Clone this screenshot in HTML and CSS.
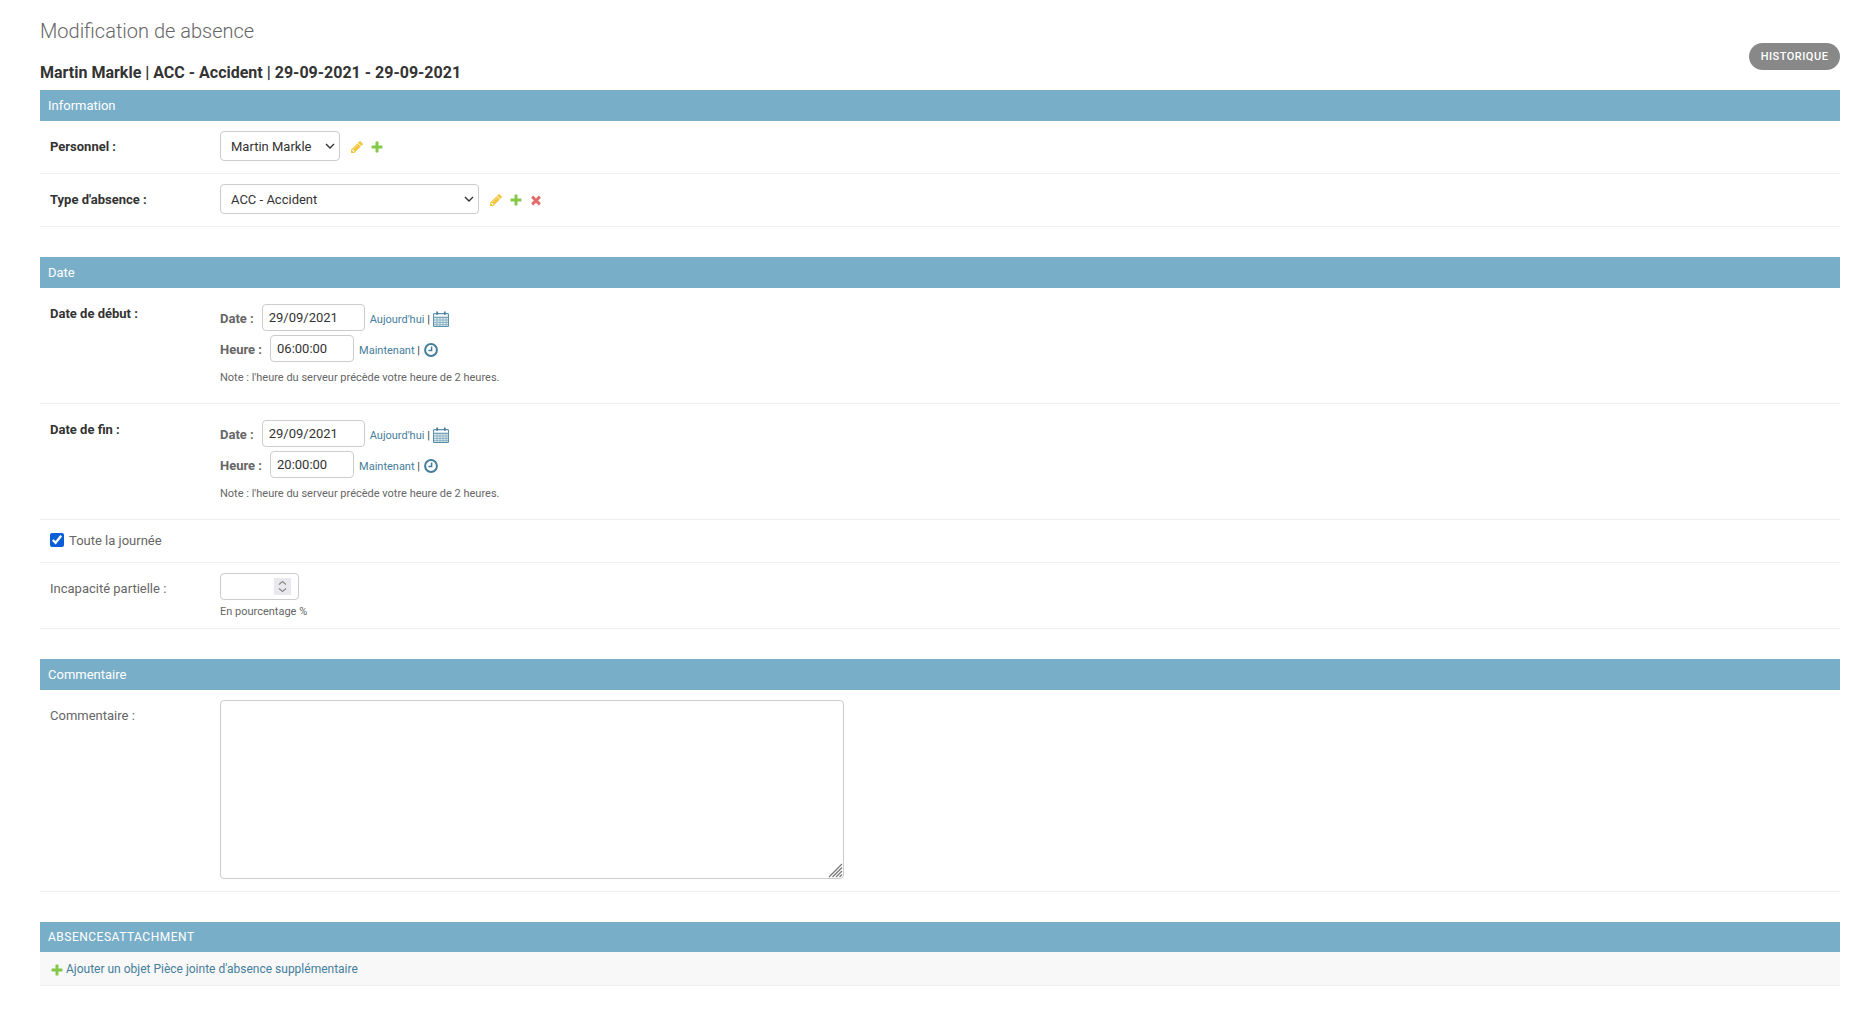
FILE: index.html
```html
<!DOCTYPE html>
<html lang="fr">
<head>
<meta charset="utf-8">
<title>Modification de absence</title>
<link rel="stylesheet" href="styles.css">
</head>
<body>
<main class="page">
  <h1 class="title">Modification de absence</h1>
  <div class="subhead">
    <h2 class="record">Martin Markle | ACC - Accident | 29-09-2021 - 29-09-2021</h2>
    <a class="history" href="#">Historique</a>
  </div>

  <section class="module">
    <h3 class="module-title">Information</h3>
    <div class="row row-select">
      <label class="label strong">Personnel :</label>
      <select class="select select-person"><option>Martin Markle</option></select>
      <span class="actions">
        <svg class="ic" viewBox="0 0 1792 1792"><path class="i-edit" d="M491 1536l91-91-235-235-91 91v107h128v128h107zm523-928q0-22-22-22-10 0-17 7l-542 542q-7 7-7 17 0 22 22 22 10 0 17-7l542-542q7-7 7-17zm-54-192l416 416-832 832h-416v-416zm683 96q0 53-37 90l-166 166-416-416 166-165q36-38 90-38 53 0 91 38l235 234q37 39 37 91z"/></svg>
        <svg class="ic" viewBox="0 0 1792 1792"><path class="i-add" d="M1600 796v192q0 40-28 68t-68 28h-416v416q0 40-28 68t-68 28h-192q-40 0-68-28t-28-68v-416h-416q-40 0-68-28t-28-68v-192q0-40 28-68t68-28h416v-416q0-40 28-68t68-28h192q40 0 68 28t28 68v416h416q40 0 68 28t28 68z"/></svg>
      </span>
    </div>
    <div class="row row-select">
      <label class="label strong">Type d'absence :</label>
      <select class="select select-type"><option>ACC - Accident</option></select>
      <span class="actions">
        <svg class="ic" viewBox="0 0 1792 1792"><path class="i-edit" d="M491 1536l91-91-235-235-91 91v107h128v128h107zm523-928q0-22-22-22-10 0-17 7l-542 542q-7 7-7 17 0 22 22 22 10 0 17-7l542-542q7-7 7-17zm-54-192l416 416-832 832h-416v-416zm683 96q0 53-37 90l-166 166-416-416 166-165q36-38 90-38 53 0 91 38l235 234q37 39 37 91z"/></svg>
        <svg class="ic" viewBox="0 0 1792 1792"><path class="i-add" d="M1600 796v192q0 40-28 68t-68 28h-416v416q0 40-28 68t-68 28h-192q-40 0-68-28t-28-68v-416h-416q-40 0-68-28t-28-68v-192q0-40 28-68t68-28h416v-416q0-40 28-68t68-28h192q40 0 68 28t28 68v416h416q40 0 68 28t28 68z"/></svg>
        <svg class="ic" viewBox="0 0 1792 1792"><path class="i-del" d="M1490 1322q0 40-28 68l-136 136q-28 28-68 28t-68-28l-294-294-294 294q-28 28-68 28t-68-28l-136-136q-28-28-28-68t28-68l294-294-294-294q-28-28-28-68t28-68l136-136q28-28 68-28t68 28l294 294 294-294q28-28 68-28t68 28l136 136q28 28 28 68t-28 68l-294 294 294 294q28 28 28 68z"/></svg>
      </span>
    </div>
  </section>

  <section class="module">
    <h3 class="module-title">Date</h3>
    <div class="row row-date">
      <label class="label strong label-date">Date de début :</label>
      <div class="datetime">
        <div class="dt-line">
          <span class="dt-label">Date :</span>
          <input class="input input-date" type="text" value="29/09/2021">
          <span class="shortcut"><a href="#">Aujourd'hui</a> | </span>
          <svg class="cal" viewBox="0 0 16 16"><path class="cal-fill" d="M1 6.5h14v8.5H1z"/><path class="cal-grid" d="M1 9h14M1 11.4h14M1 13.6h14M4 6v9M7 6v9M10 6v9M13 6v9"/><path class="cal-body" d="M1.5 2.6h13a1 1 0 0 1 1 1v11a1 1 0 0 1-1 1h-13a1 1 0 0 1-1-1v-11a1 1 0 0 1 1-1zM.5 6.2h15"/><path class="cal-ring" d="M4.2.6v3.2M11.8.6v3.2"/></svg>
        </div>
        <div class="dt-line">
          <span class="dt-label">Heure :</span>
          <input class="input input-time" type="text" value="06:00:00">
          <span class="shortcut"><a href="#">Maintenant</a> | </span>
          <svg class="clock" viewBox="0 0 14 14"><circle class="clock-ring" cx="7" cy="7" r="5.9"/><path class="clock-hand" d="M7.6 3.4v4.1H4.4"/></svg>
        </div>
        <p class="help help-note">Note : l'heure du serveur précède votre heure de 2 heures.</p>
      </div>
    </div>
    <div class="row row-date">
      <label class="label strong label-date">Date de fin :</label>
      <div class="datetime">
        <div class="dt-line">
          <span class="dt-label">Date :</span>
          <input class="input input-date" type="text" value="29/09/2021">
          <span class="shortcut"><a href="#">Aujourd'hui</a> | </span>
          <svg class="cal" viewBox="0 0 16 16"><path class="cal-fill" d="M1 6.5h14v8.5H1z"/><path class="cal-grid" d="M1 9h14M1 11.4h14M1 13.6h14M4 6v9M7 6v9M10 6v9M13 6v9"/><path class="cal-body" d="M1.5 2.6h13a1 1 0 0 1 1 1v11a1 1 0 0 1-1 1h-13a1 1 0 0 1-1-1v-11a1 1 0 0 1 1-1zM.5 6.2h15"/><path class="cal-ring" d="M4.2.6v3.2M11.8.6v3.2"/></svg>
        </div>
        <div class="dt-line">
          <span class="dt-label">Heure :</span>
          <input class="input input-time" type="text" value="20:00:00">
          <span class="shortcut"><a href="#">Maintenant</a> | </span>
          <svg class="clock" viewBox="0 0 14 14"><circle class="clock-ring" cx="7" cy="7" r="5.9"/><path class="clock-hand" d="M7.6 3.4v4.1H4.4"/></svg>
        </div>
        <p class="help help-note">Note : l'heure du serveur précède votre heure de 2 heures.</p>
      </div>
    </div>
    <div class="row row-check">
      <input class="check" type="checkbox" id="allday" checked>
      <label class="check-label" for="allday">Toute la journée</label>
    </div>
    <div class="row row-number">
      <label class="label label-number">Incapacité partielle :</label>
      <div>
        <div class="number-wrap">
          <input class="input input-number" type="number">
          <span class="spin"><svg class="spin-ic" viewBox="0 0 17 17"><path class="spin-path" d="M5 6.5l3.5-3 3.5 3M5 10.5l3.5 3 3.5-3"/></svg></span>
        </div>
        <p class="help help-pct">En pourcentage %</p>
      </div>
    </div>
  </section>

  <section class="module">
    <h3 class="module-title">Commentaire</h3>
    <div class="row row-comment">
      <label class="label label-comment">Commentaire :</label>
      <textarea class="textarea"></textarea>
    </div>
  </section>

  <section class="module">
    <h3 class="module-title module-title-caps">AbsencesAttachment</h3>
    <div class="add-row">
      <svg class="ic-add" viewBox="0 0 1792 1792"><path class="i-add" d="M1600 796v192q0 40-28 68t-68 28h-416v416q0 40-28 68t-68 28h-192q-40 0-68-28t-28-68v-416h-416q-40 0-68-28t-28-68v-192q0-40 28-68t68-28h416v-416q0-40 28-68t68-28h192q40 0 68 28t28 68v416h416q40 0 68 28t28 68z"/></svg>
      <a href="#">Ajouter un objet Pièce jointe d'absence supplémentaire</a>
    </div>
  </section>
</main>
</body>
</html>
```
FILE: styles.css
```css
* { box-sizing: border-box; }
html, body { margin: 0; padding: 0; background: #fff; }
body { font-family: Roboto, "Liberation Sans", sans-serif; font-size: 13px; color: #333; }
a { color: #447e9b; text-decoration: none; }
.page { padding: 20px 20px 0 40px; }
.title { margin: 0; font-size: 20px; font-weight: 300; line-height: 23px; color: #666; }
.subhead { display: flex; justify-content: space-between; align-items: flex-end; height: 47px; }
.record { margin: 0 0 8px; font-size: 16px; font-weight: 700; line-height: 19px; color: #333; }
.history { display: block; margin-bottom: 20px; height: 27px; width: 91px; border-radius: 15px; background: #888; color: #fff; font-size: 11px; font-weight: 500; line-height: 27px; letter-spacing: .5px; text-align: center; text-transform: uppercase; }
.module { margin-bottom: 30px; }
.module-title { margin: 0; height: 31px; padding: 8px; background: #79aec8; color: #fff; font-size: 13px; font-weight: 400; line-height: 15px; }
.module-title-caps { height: 30px; font-size: 12px; letter-spacing: .5px; text-transform: uppercase; }
.row { display: flex; border-bottom: 1px solid #eee; padding-left: 10px; }
.label { flex: none; width: 170px; color: #666; }
.strong { font-weight: 700; color: #333; }
.row-select { height: 53px; padding-top: 10px; align-items: flex-start; }
.row-select .label { line-height: 32px; }
.select { appearance: none; height: 30px; border: 1px solid #ccc; border-radius: 4px; background: #fff url("data:image/svg+xml,%3Csvg xmlns='http://www.w3.org/2000/svg' width='10' height='6'%3E%3Cpath d='M1 1l4 4 4-4' fill='none' stroke='%23333' stroke-width='1.4'/%3E%3C/svg%3E") no-repeat right 4px center; color: #333; font: 13px Roboto, "Liberation Sans", sans-serif; padding: 0 6px 0 10px; }
.select-person { width: 120px; }
.select-type { width: 259px; }
.actions { display: flex; align-items: center; gap: 6px; height: 30px; margin-left: 10px; padding-top: 2px; }
.ic { width: 14px; height: 14px; display: block; }
.i-edit { fill: #efb80b; opacity: .8; }
.i-add { fill: #70bf2b; opacity: .85; }
.i-del { fill: #dd4646; opacity: .8; }
.row-date { height: 116px; padding-top: 16px; }
.label-date { line-height: 20px; }
.datetime { display: flex; flex-direction: column; gap: 4px; }
.dt-line { display: flex; align-items: center; height: 27px; }
.dt-label { flex: none; font-weight: 700; color: #666; margin-right: 8px; padding-top: 2px; }
.input { height: 27px; border: 1px solid #ccc; border-radius: 4px; background: #fff; color: #333; font: 13px Roboto, "Liberation Sans", sans-serif; padding: 0 6px; }
.input-date { width: 103px; }
.input-time { width: 84px; }
.number-wrap { position: relative; }
.input-number { width: 79px; display: block; appearance: textfield; }
.spin { position: absolute; left: 54px; top: 5px; width: 17px; height: 17px; background: #e9e9ed; }
.spin-ic { display: block; width: 17px; height: 17px; }
.spin-path { fill: none; stroke: #8a8a8a; stroke-width: 1.2; }
.shortcut { font-size: 11px; color: #333; margin-left: 5px; padding-top: 3px; white-space: pre; }
.cal { width: 16px; height: 16px; margin-top: 2px; }
.cal-fill { fill: #dbe8ee; }
.cal-body { fill: none; stroke: #5a90a9; stroke-width: 1.1; }
.cal-grid { stroke: #7aa6ba; stroke-width: .7; fill: none; }
.cal-ring { stroke: #447e9b; stroke-width: 1.7; fill: none; }
.clock { width: 14px; height: 14px; margin-left: 1px; margin-top: 3px; }
.clock-ring { fill: #fff; stroke: #447e9b; stroke-width: 2; }
.clock-hand { stroke: #447e9b; stroke-width: 1.5; fill: none; }
.help { margin: 0; font-size: 11px; line-height: 13px; color: #666; }
.help-note { margin-top: 5px; }
.help-pct { margin-top: 5px; }
.row-check { height: 43px; padding-top: 13px; align-items: flex-start; }
.check { width: 14px; height: 14px; margin: 0 5px 0 0; accent-color: #0a5fd9; }
.check-label { color: #666; line-height: 16px; }
.row-number { height: 66px; padding-top: 10px; }
.label-number { line-height: 32px; }
.row-comment { height: 202px; padding-top: 10px; }
.label-comment { line-height: 32px; }
.textarea { width: 624px; height: 179px; border: 1px solid #ccc; border-radius: 4px; background: #fff; margin: 0; padding: 6px; display: block; }
.textarea::-webkit-resizer { background: url("data:image/svg+xml,%3Csvg xmlns='http://www.w3.org/2000/svg' width='15' height='15'%3E%3Cpath d='M1 14L14 1M4.5 14L14 4.5M8 14l6-6M11.5 14l2.5-2.5' fill='none' stroke='%23777' stroke-width='1.2'/%3E%3C/svg%3E") no-repeat; }
.add-row { display: flex; align-items: center; height: 34px; padding-left: 10px; background: #f8f8f8; border-bottom: 1px solid #eee; font-size: 12px; }
.ic-add { width: 14px; height: 14px; margin-right: 2px; margin-top: 2px; }
```
